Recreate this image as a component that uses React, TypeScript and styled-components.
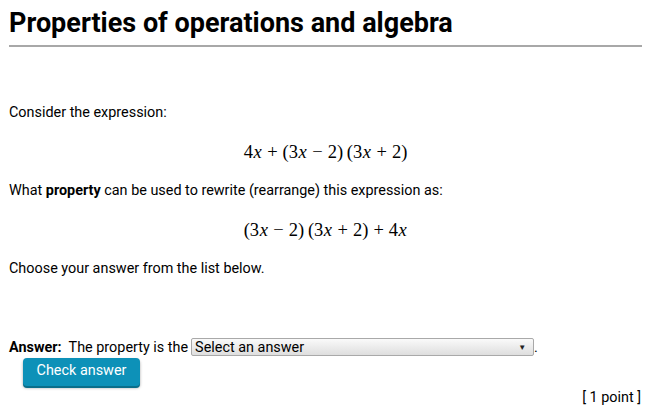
import React from "react";
import styled, { createGlobalStyle } from "styled-components";

const Global = createGlobalStyle`
  html, body { margin: 0; padding: 0; background: #fff; }
  body { font-family: Roboto, "Liberation Sans", sans-serif; color: #000; font-size: 14.4px; }
`;

const Page = styled.div`
  padding: 0 4px 0 9px;
`;

const Title = styled.h1`
  margin: 0;
  padding-top: 4px;
  font-size: 27px;
  line-height: 38px;
  font-weight: 700;
  padding-bottom: 3px;
  border-bottom: 2px solid #a8a8a8;
`;

const Para = styled.p<{ $top: number }>`
  margin: ${(p) => p.$top}px 0 0;
  line-height: 20px;
`;

const MathLine = styled.div`
  text-align: center;
  margin-top: 16px;
  font-family: "Liberation Serif", "Times New Roman", serif;
  font-size: 18.5px;
  line-height: 26px;
`;

const V = styled.i`
  font-style: italic;
  padding: 0 0.5px;
`;

const Op = styled.span`
  padding: 0 5px;
`;

const AnswerRow = styled.div`
  margin-top: 58px;
  display: flex;
  align-items: center;
  height: 20px;
`;

const Label = styled.b`
  font-weight: 700;
  margin-right: 7px;
`;

const Select = styled.div`
  margin-left: 3px;
  width: 343px;
  height: 18px;
  box-sizing: border-box;
  border: 1px solid #a9a9a9;
  border-radius: 2px;
  background: linear-gradient(#fafafa, #dedede);
  display: flex;
  align-items: center;
  justify-content: space-between;
  padding: 0 7px 0 3px;
  font-size: 14.4px;
`;

const Arrow = styled.span`
  font-size: 8px;
  color: #222;
`;

const Button = styled.button`
  margin: 1px 0 0 14px;
  width: 117px;
  height: 28px;
  border: none;
  border-radius: 4px;
  background: #0d91b8;
  color: #fff;
  font-family: Roboto, "Liberation Sans", sans-serif;
  font-size: 14.4px;
  box-shadow: 0 2px 0 #0a6e8a, 0 2px 3px rgba(0,0,0,0.35);
  padding: 0 0 3px;
  display: block;
`;

const Points = styled.div`
  text-align: right;
  margin-top: 3px;
  padding-right: 1px;
`;

export default function App() {
  return (
    <Page>
      <Global />
      <Title>Properties of operations and algebra</Title>
      <Para $top={56}>Consider the expression:</Para>
      <MathLine>
        4<V>x</V><Op>+</Op>(3<V>x</V><Op>−</Op>2)&thinsp;(3<V>x</V><Op>+</Op>2)
      </MathLine>
      <Para $top={16}>
        What <b>property</b> can be used to rewrite (rearrange) this expression as:
      </Para>
      <MathLine>
        (3<V>x</V><Op>−</Op>2)&thinsp;(3<V>x</V><Op>+</Op>2)<Op>+</Op>4<V>x</V>
      </MathLine>
      <Para $top={16}>Choose your answer from the list below.</Para>
      <AnswerRow>
        <Label>Answer:</Label>
        The property is the
        <Select>
          <span>Select an answer</span>
          <Arrow>▼</Arrow>
        </Select>
        .
      </AnswerRow>
      <Button>Check answer</Button>
      <Points>[ 1 point ]</Points>
    </Page>
  );
}
